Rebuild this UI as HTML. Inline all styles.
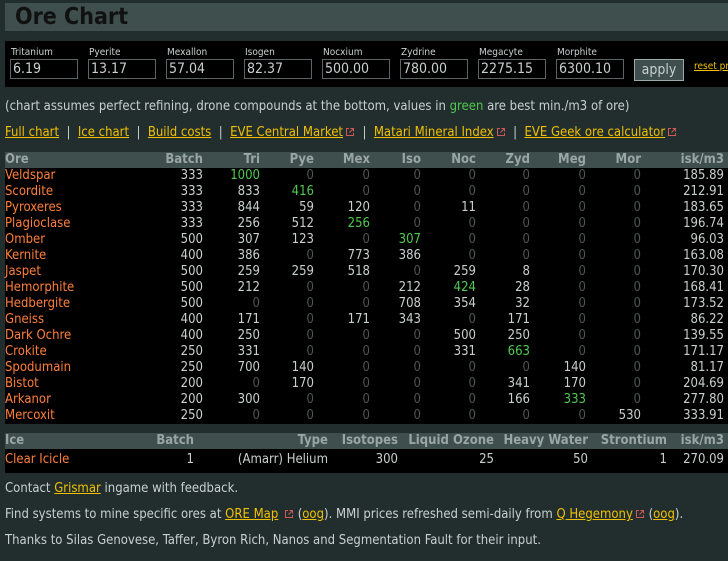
<!DOCTYPE html>
<html><head><meta charset="utf-8"><style>
*{margin:0;padding:0;box-sizing:border-box}
body{width:728px;height:561px;background:#222e2e;color:#c8d0cf;font-family:"DejaVu Sans Condensed","DejaVu Sans",sans-serif;font-size:13px;position:relative;overflow:hidden}
.title{position:absolute;left:5px;top:3px;width:723px;height:28px;background:#3f4f4e}
.title h1{font-family:"DejaVu Sans Condensed",sans-serif;font-size:23px;font-weight:bold;color:#111;position:absolute;left:10px;top:1px}
.prices{position:absolute;left:5px;top:41px;width:723px;height:46px;background:#000}
.f{position:absolute;top:6px;width:68px}
.f label{display:block;font-size:10px;color:#c8d0cf;margin-left:1px;height:12px}
.f div{width:68px;height:20px;border:1px solid #5a6665;color:#c8d0cf;font-size:14px;padding-left:2px;line-height:18px}
.apply{position:absolute;left:629px;top:18px;width:50px;height:22px;background:#3f4f4e;border:1px solid #9aa;color:#c8d0cf;font-size:14px;text-align:center;line-height:21px}
.reset{position:absolute;left:689px;top:20px;font-size:10px;color:#f0c000;text-decoration:underline;white-space:nowrap}
a{color:#f0c000;text-decoration:underline}
.g{color:#4fc94f}
.ext{display:inline-block;width:10px;height:10px;margin-left:2px;vertical-align:-1px}
.line{position:absolute;left:5px;white-space:nowrap}
table{position:absolute;left:5px;width:723px;border-collapse:collapse;table-layout:fixed;background:#000}
th{background:#3f4f4e;color:#9aa6a5;font-weight:bold;font-size:13px;height:16px;text-align:right;padding:0;line-height:16px;white-space:nowrap}
td{height:16px;text-align:right;padding:0;line-height:16px;color:#c8d0cf;white-space:nowrap}
td:first-child,th:first-child{text-align:left}
td:first-child{color:#ff7f3a}
.z{color:#4c5554}
td:last-child,th:last-child{padding-right:4px}
</style></head><body>
<svg width="0" height="0" style="position:absolute"><symbol id="e" viewBox="0 0 10 10"><path d="M4 1.5H1.5V8.5H8.5V6M5.5 1.5H8.5V4.5M8.5 1.5L4.5 5.5" fill="none" stroke="#d05858" stroke-width="1"/></symbol></svg>
<div class="title"><h1>Ore Chart</h1></div>
<div class="prices">
<div class="f" style="left:5px"><label>Tritanium</label><div>6.19</div></div>
<div class="f" style="left:83px"><label>Pyerite</label><div>13.17</div></div>
<div class="f" style="left:161px"><label>Mexallon</label><div>57.04</div></div>
<div class="f" style="left:239px"><label>Isogen</label><div>82.37</div></div>
<div class="f" style="left:317px"><label>Nocxium</label><div>500.00</div></div>
<div class="f" style="left:395px"><label>Zydrine</label><div>780.00</div></div>
<div class="f" style="left:473px"><label>Megacyte</label><div>2275.15</div></div>
<div class="f" style="left:551px"><label>Morphite</label><div>6300.10</div></div>
<div class="apply">apply</div>
<div class="reset">reset prices</div>
</div>
<div class="line" style="top:99px">(chart assumes perfect refining, drone compounds at the bottom, values in <span class="g">green</span> are best min./m3 of ore)</div>
<div class="line" style="top:125px"><a>Full chart</a> &nbsp;|&nbsp; <a>Ice chart</a> &nbsp;|&nbsp; <a>Build costs</a> &nbsp;|&nbsp; <a>EVE Central Market</a><svg class="ext"><use href="#e"/></svg> &nbsp;|&nbsp; <a>Matari Mineral Index</a><svg class="ext"><use href="#e"/></svg> &nbsp;|&nbsp; <a>EVE Geek ore calculator</a><svg class="ext"><use href="#e"/></svg></div>
<table style="top:152px">
<colgroup><col style="width:145px"><col style="width:53px"><col style="width:57px"><col style="width:54px"><col style="width:56px"><col style="width:51px"><col style="width:55px"><col style="width:54px"><col style="width:56px"><col style="width:55px"><col style="width:87px"></colgroup>
<tr><th>Ore</th><th>Batch</th><th>Tri</th><th>Pye</th><th>Mex</th><th>Iso</th><th>Noc</th><th>Zyd</th><th>Meg</th><th>Mor</th><th>isk/m3</th></tr>
<tr><td>Veldspar</td><td>333</td><td class="g">1000</td><td class="z">0</td><td class="z">0</td><td class="z">0</td><td class="z">0</td><td class="z">0</td><td class="z">0</td><td class="z">0</td><td>185.89</td></tr>
<tr><td>Scordite</td><td>333</td><td>833</td><td class="g">416</td><td class="z">0</td><td class="z">0</td><td class="z">0</td><td class="z">0</td><td class="z">0</td><td class="z">0</td><td>212.91</td></tr>
<tr><td>Pyroxeres</td><td>333</td><td>844</td><td>59</td><td>120</td><td class="z">0</td><td>11</td><td class="z">0</td><td class="z">0</td><td class="z">0</td><td>183.65</td></tr>
<tr><td>Plagioclase</td><td>333</td><td>256</td><td>512</td><td class="g">256</td><td class="z">0</td><td class="z">0</td><td class="z">0</td><td class="z">0</td><td class="z">0</td><td>196.74</td></tr>
<tr><td>Omber</td><td>500</td><td>307</td><td>123</td><td class="z">0</td><td class="g">307</td><td class="z">0</td><td class="z">0</td><td class="z">0</td><td class="z">0</td><td>96.03</td></tr>
<tr><td>Kernite</td><td>400</td><td>386</td><td class="z">0</td><td>773</td><td>386</td><td class="z">0</td><td class="z">0</td><td class="z">0</td><td class="z">0</td><td>163.08</td></tr>
<tr><td>Jaspet</td><td>500</td><td>259</td><td>259</td><td>518</td><td class="z">0</td><td>259</td><td>8</td><td class="z">0</td><td class="z">0</td><td>170.30</td></tr>
<tr><td>Hemorphite</td><td>500</td><td>212</td><td class="z">0</td><td class="z">0</td><td>212</td><td class="g">424</td><td>28</td><td class="z">0</td><td class="z">0</td><td>168.41</td></tr>
<tr><td>Hedbergite</td><td>500</td><td class="z">0</td><td class="z">0</td><td class="z">0</td><td>708</td><td>354</td><td>32</td><td class="z">0</td><td class="z">0</td><td>173.52</td></tr>
<tr><td>Gneiss</td><td>400</td><td>171</td><td class="z">0</td><td>171</td><td>343</td><td class="z">0</td><td>171</td><td class="z">0</td><td class="z">0</td><td>86.22</td></tr>
<tr><td>Dark Ochre</td><td>400</td><td>250</td><td class="z">0</td><td class="z">0</td><td class="z">0</td><td>500</td><td>250</td><td class="z">0</td><td class="z">0</td><td>139.55</td></tr>
<tr><td>Crokite</td><td>250</td><td>331</td><td class="z">0</td><td class="z">0</td><td class="z">0</td><td>331</td><td class="g">663</td><td class="z">0</td><td class="z">0</td><td>171.17</td></tr>
<tr><td>Spodumain</td><td>250</td><td>700</td><td>140</td><td class="z">0</td><td class="z">0</td><td class="z">0</td><td class="z">0</td><td>140</td><td class="z">0</td><td>81.17</td></tr>
<tr><td>Bistot</td><td>200</td><td class="z">0</td><td>170</td><td class="z">0</td><td class="z">0</td><td class="z">0</td><td>341</td><td>170</td><td class="z">0</td><td>204.69</td></tr>
<tr><td>Arkanor</td><td>200</td><td>300</td><td class="z">0</td><td class="z">0</td><td class="z">0</td><td class="z">0</td><td>166</td><td class="g">333</td><td class="z">0</td><td>277.80</td></tr>
<tr><td>Mercoxit</td><td>250</td><td class="z">0</td><td class="z">0</td><td class="z">0</td><td class="z">0</td><td class="z">0</td><td class="z">0</td><td class="z">0</td><td>530</td><td>333.91</td></tr>
</table>
<table style="top:433px">
<colgroup><col style="width:130px"><col style="width:59px"><col style="width:134px"><col style="width:70px"><col style="width:96px"><col style="width:94px"><col style="width:79px"><col style="width:61px"></colgroup>
<tr><th>Ice</th><th>Batch</th><th>Type</th><th>Isotopes</th><th>Liquid Ozone</th><th>Heavy Water</th><th>Strontium</th><th>isk/m3</th></tr>
<tr style="height:24px"><td style="padding-top:3px;vertical-align:top">Clear Icicle</td><td style="padding-top:3px;vertical-align:top">1</td><td style="padding-top:3px;vertical-align:top">(Amarr) Helium</td><td style="padding-top:3px;vertical-align:top">300</td><td style="padding-top:3px;vertical-align:top">25</td><td style="padding-top:3px;vertical-align:top">50</td><td style="padding-top:3px;vertical-align:top">1</td><td style="padding-top:3px;vertical-align:top">270.09</td></tr>
</table>
<div class="line" style="top:481px">Contact <a>Grismar</a> ingame with feedback.</div>
<div class="line" style="top:507px">Find systems to mine specific ores at <a>ORE Map</a> <svg class="ext"><use href="#e"/></svg> (<a>oog</a>). MMI prices refreshed semi-daily from <a>Q Hegemony</a><svg class="ext"><use href="#e"/></svg> (<a>oog</a>).</div>
<div class="line" style="top:533px">Thanks to Silas Genovese, Taffer, Byron Rich, Nanos and Segmentation Fault for their input.</div>
</body></html>
